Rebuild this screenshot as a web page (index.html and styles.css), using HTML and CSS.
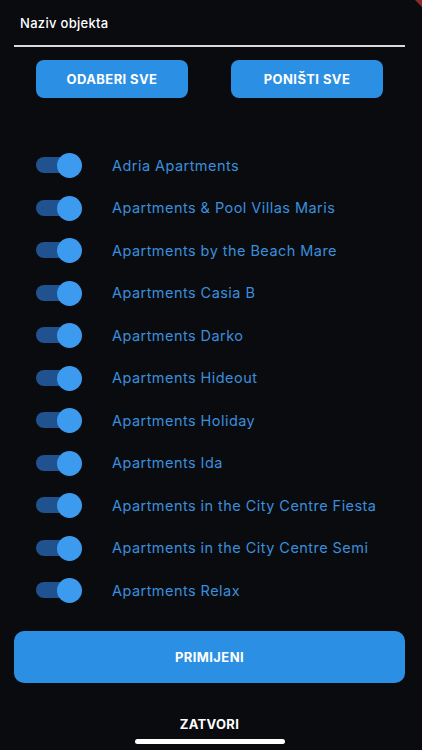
FILE: index.html
```html
<!DOCTYPE html>
<html lang="en">
<head>
    <meta charset="UTF-8">
    <meta name="viewport" content="width=device-width, initial-scale=1.0">
    <title>Naziv objekta</title>
    <link rel="stylesheet" href="styles.css">
</head>
<body>
    <div class="corner"></div>
    <div class="screen">
        <div class="field">
            <label class="field-label">Naziv objekta</label>
        </div>
        <div class="actions">
            <button class="btn">ODABERI SVE</button>
            <button class="btn">PONIŠTI SVE</button>
        </div>
        <ul class="list">
            <li class="row"><span class="toggle"></span><span class="name">Adria Apartments</span></li>
            <li class="row"><span class="toggle"></span><span class="name">Apartments &amp; Pool Villas Maris</span></li>
            <li class="row"><span class="toggle"></span><span class="name">Apartments by the Beach Mare</span></li>
            <li class="row"><span class="toggle"></span><span class="name">Apartments Casia B</span></li>
            <li class="row"><span class="toggle"></span><span class="name">Apartments Darko</span></li>
            <li class="row"><span class="toggle"></span><span class="name">Apartments Hideout</span></li>
            <li class="row"><span class="toggle"></span><span class="name">Apartments Holiday</span></li>
            <li class="row"><span class="toggle"></span><span class="name">Apartments Ida</span></li>
            <li class="row"><span class="toggle"></span><span class="name">Apartments in the City Centre Fiesta</span></li>
            <li class="row"><span class="toggle"></span><span class="name">Apartments in the City Centre Semi</span></li>
            <li class="row"><span class="toggle"></span><span class="name">Apartments Relax</span></li>
        </ul>
        <button class="btn btn-wide">PRIMIJENI</button>
        <div class="close">ZATVORI</div>
        <div class="home-bar"></div>
    </div>
</body>
</html>
```

FILE: styles.css
```css
body { margin: 0; background: #0a0b0f; font-family: Inter, "Noto Sans", sans-serif; color: #fff; }
.corner { position: absolute; top: 0; right: 0; width: 0; height: 0; border-top: 7px solid #8a2a2e; border-left: 7px solid transparent; }
.screen { width: 422px; height: 750px; display: flex; flex-direction: column; box-sizing: border-box; padding: 0 17px 0 14px; }
.field { height: 47px; border-bottom: 2px solid #d9d9d9; display: flex; align-items: flex-start; padding: 15px 0 0 6px; box-sizing: border-box; }
.field-label { font-size: 13px; font-weight: 500; letter-spacing: 0.3px; }
.actions { display: flex; justify-content: space-between; padding: 13px 22px 0 22px; }
.btn { background: #2b8fe3; color: #fff; border: none; border-radius: 8px; font-family: Inter, "Noto Sans", sans-serif; font-size: 13px; font-weight: 700; letter-spacing: 0.4px; width: 152px; height: 38px; }
.list { list-style: none; margin: 0; padding: 46px 0 0 22px; }
.row { display: flex; align-items: center; height: 42.5px; }
.toggle { position: relative; width: 44px; height: 16px; border-radius: 8px; background: #1f528f; margin-right: 32px; }
.toggle::after { content: ""; position: absolute; right: -2px; top: -4px; width: 25px; height: 25px; border-radius: 50%; background: #3d9bef; }
.name { font-size: 14.5px; color: #3a8fdc; letter-spacing: 0.45px; }
.btn-wide { width: 391px; height: 52px; border-radius: 10px; margin-top: 19px; }
.close { text-align: center; font-size: 13px; font-weight: 700; letter-spacing: 0.3px; margin-top: 33px; }
.home-bar { width: 150px; height: 5px; border-radius: 3px; background: #fff; margin: 7px auto 0; }
```
